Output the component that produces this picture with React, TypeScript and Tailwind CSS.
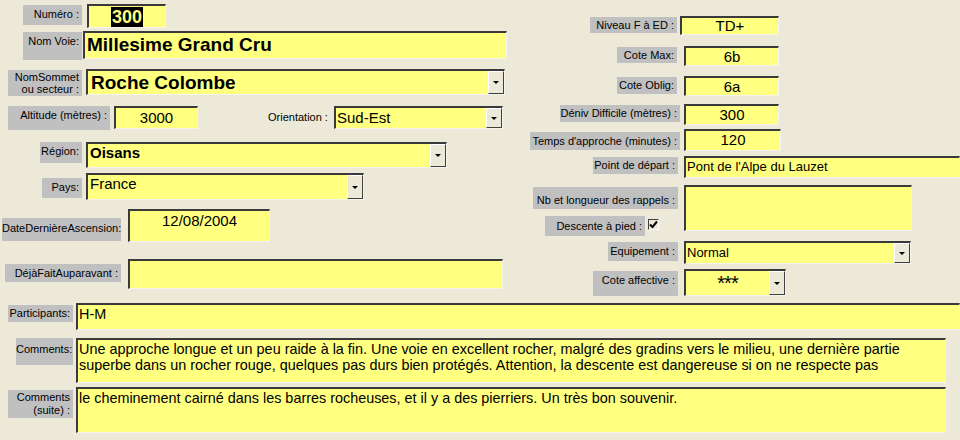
// Formulaire Access "Voies" : fiche d'une voie d'escalade
import type { ReactNode } from 'react'

const LBL =
  'bg-[#c0c0c0] text-right text-[11px] leading-[13px] text-black pr-[3px] pt-[3px] whitespace-nowrap'
const FLD =
  'bg-[#ffff80] border-t-2 border-l-2 border-t-[#3a3a3a] border-l-[#3a3a3a] border-b border-r border-b-[#f4f4ee] border-r-[#f4f4ee] text-black overflow-hidden'

// petit bouton de liste déroulante (style Windows)
function DropBtn() {
  return (
    <div className="flex w-[16px] shrink-0 items-center justify-center border-t border-l border-t-white border-l-white border-b border-r border-b-[#404040] border-r-[#404040] bg-[#ece9d8]">
      <div className="h-0 w-0 border-t-[3px] border-r-[3px] border-l-[3px] border-t-black border-r-transparent border-l-transparent" />
    </div>
  )
}

function Combo({ className, children }: { className: string; children?: ReactNode }) {
  return (
    <div className={`${FLD} flex ${className}`}>
      <div className="min-w-0 flex-1">{children}</div>
      <DropBtn />
    </div>
  )
}

function Left() {
  return (
    <div className="flex w-[520px] shrink-0 flex-col">
      {/* Numéro */}
      <div className="mt-[4px] flex h-[24px] items-start">
        <div className={`${LBL} ml-[23px] mt-[1px] h-[20px] w-[59px]`}>Numéro :</div>
        <div className={`${FLD} ml-[5px] flex h-[24px] w-[79px] items-center justify-center`}>
          <span className="bg-black px-[1px] text-[18px] font-bold leading-[20px] text-[#ffff80]">300</span>
        </div>
      </div>

      {/* Nom Voie */}
      <div className="mt-[3px] flex h-[29px] items-start">
        <div className={`${LBL} ml-[23px] mt-[1px] h-[28px] w-[59px]`}>Nom Voie:</div>
        <div className={`${FLD} ml-[1px] h-[28px] w-[424px] pl-[2px] text-[19px] font-bold leading-[24px]`}>
          Millesime Grand Cru
        </div>
      </div>

      {/* NomSommet */}
      <div className="mt-[9px] flex h-[27px] items-start">
        <div className={`${LBL} ml-[8px] mt-[1px] h-[26px] w-[74px] !pt-[1px] !leading-[12px]`}>
          NomSommet
          <br />
          ou secteur :
        </div>
        <Combo className="ml-[4px] h-[26px] w-[419px]">
          <div className="pl-[3px] text-[19px] font-bold leading-[24px]">Roche Colombe</div>
        </Combo>
      </div>

      {/* Altitude / Orientation */}
      <div className="mt-[10px] flex h-[24px] items-start">
        <div className={`${LBL} ml-[8px] h-[24px] w-[102px]`}>Altitude (mètres) :</div>
        <div className={`${FLD} ml-[4px] h-[23px] w-[84px] text-center text-[15px] leading-[20px]`}>3000</div>
        <div className="ml-[70px] mt-[5px] w-[64px] text-[11px] leading-[13px] whitespace-nowrap">Orientation :</div>
        <Combo className="ml-[2px] h-[23px] w-[169px]">
          <div className="pl-[1px] text-[15px] leading-[19px]">Sud-Est</div>
        </Combo>
      </div>

      {/* Région */}
      <div className="mt-[12px] flex h-[26px] items-start">
        <div className={`${LBL} ml-[40px] h-[21px] w-[42px]`}>Région:</div>
        <Combo className="ml-[4px] h-[26px] w-[361px]">
          <div className="pl-[2px] text-[15px] font-bold leading-[18px]">Oisans</div>
        </Combo>
      </div>

      {/* Pays */}
      <div className="mt-[5px] flex h-[27px] items-start">
        <div className={`${LBL} ml-[42px] mt-[5px] h-[20px] w-[40px]`}>Pays:</div>
        <Combo className="ml-[4px] h-[27px] w-[278px]">
          <div className="pl-[2px] text-[15px] leading-[18px]">France</div>
        </Combo>
      </div>

      {/* DateDernièreAscension */}
      <div className="mt-[9px] flex h-[33px] items-start">
        <div className={`${LBL} ml-[2px] mt-[9px] h-[23px] w-[119px] !pt-[4px] !pr-[2px]`}>DateDernièreAscension:</div>
        <div className={`${FLD} ml-[7px] h-[33px] w-[142px] text-center text-[15px] leading-[20px]`}>12/08/2004</div>
      </div>

      {/* DéjàFaitAuparavant */}
      <div className="mt-[17px] flex h-[30px] items-start">
        <div className={`${LBL} ml-[5px] mt-[5px] h-[18px] w-[116px]`}>DéjàFaitAuparavant :</div>
        <div className={`${FLD} ml-[7px] h-[30px] w-[375px]`} />
      </div>
    </div>
  )
}

function Right() {
  return (
    <div className="flex flex-1 flex-col">
      <div className="mt-[16px] flex h-[19px] items-start">
        <div className={`${LBL} ml-[70px] mt-[1px] h-[16px] w-[87px] !pt-[2px]`}>Niveau F à ED :</div>
        <div className={`${FLD} ml-[3px] h-[19px] w-[99px] text-center text-[15px] leading-[16px]`}>TD+</div>
      </div>
      <div className="mt-[11px] flex h-[20px] items-start">
        <div className={`${LBL} ml-[97px] mt-[1px] h-[16px] w-[60px] !pt-[2px]`}>Cote Max:</div>
        <div className={`${FLD} ml-[7px] h-[20px] w-[95px] text-center text-[15px] leading-[17px]`}>6b</div>
      </div>
      <div className="mt-[10px] flex h-[20px] items-start">
        <div className={`${LBL} ml-[97px] mt-[1px] h-[17px] w-[60px] !pt-[2px]`}>Cote Oblig:</div>
        <div className={`${FLD} ml-[7px] h-[20px] w-[95px] text-center text-[15px] leading-[17px]`}>6a</div>
      </div>
      <div className="mt-[8px] flex h-[22px] items-start">
        <div className={`${LBL} ml-[40px] mt-[1px] h-[17px] w-[120px] !pt-[2px]`}>Déniv Difficile (mètres) :</div>
        <div className={`${FLD} ml-[4px] h-[21px] w-[95px] text-center text-[15px] leading-[17px]`}>300</div>
      </div>
      <div className="mt-[3px] flex h-[24px] items-start">
        <div className={`${LBL} ml-[10px] mt-[3px] h-[18px] w-[150px] !pt-[3px]`}>Temps d'approche (minutes) :</div>
        <div className={`${FLD} ml-[4px] h-[22px] w-[97px] text-center text-[15px] leading-[17px]`}>120</div>
      </div>
      <div className="mt-[3px] flex h-[22px] items-start">
        <div className={`${LBL} ml-[73px] mt-[1px] h-[17px] w-[85px] !pt-[2px]`}>Point de départ :</div>
        <div className={`${FLD} ml-[6px] h-[22px] w-[276px] pl-[1px] text-[13px] leading-[17px]`}>
          Pont de l'Alpe du Lauzet
        </div>
      </div>

      {/* rappels + descente à pied */}
      <div className="mt-[7px] flex h-[51px] items-start">
        <div className="flex w-[164px] flex-col">
          <div className={`${LBL} ml-[13px] mt-[2px] h-[22px] w-[145px] !pt-[7px]`}>Nb et longueur des rappels :</div>
          <div className="ml-[25px] mt-[7px] flex items-start">
            <div className={`${LBL} h-[20px] w-[100px] !pt-[4px]`}>Descente à pied :</div>
            <div className="ml-[3px] mt-[3px] flex h-[11px] w-[11px] items-center justify-center border-t border-l border-t-[#404040] border-l-[#404040] border-b border-r border-b-white border-r-white bg-[#ece9d8]">
              <svg width="9" height="9" viewBox="0 0 9 9">
                <path d="M1 4.5 L3.5 7 L8 1.5" fill="none" stroke="black" strokeWidth="2" />
              </svg>
            </div>
          </div>
        </div>
        <div className={`${FLD} h-[46px] w-[228px]`} />
      </div>

      <div className="mt-[5px] flex h-[23px] items-start">
        <div className={`${LBL} ml-[88px] mt-[1px] h-[19px] w-[70px] !pt-[3px]`}>Equipement :</div>
        <Combo className="ml-[6px] h-[23px] w-[227px]">
          <div className="pl-[1px] text-[13px] leading-[19px]">Normal</div>
        </Combo>
      </div>
      <div className="mt-[5px] flex h-[27px] items-start">
        <div className={`${LBL} ml-[73px] mt-[2px] h-[25px] w-[85px]`}>Cote affective :</div>
        <Combo className="ml-[6px] h-[27px] w-[102px]">
          <div className="pt-[2px] text-center text-[20px] leading-[20px] tracking-[-1px]">***</div>
        </Combo>
      </div>
    </div>
  )
}

export default function App() {
  return (
    <div className="h-[440px] w-[960px] overflow-hidden bg-[#ece9d8] font-['Liberation_Sans',Arial,sans-serif] text-black">
      <div className="flex h-[300px]">
        <Left />
        <Right />
      </div>

      {/* Participants */}
      <div className="mt-[3px] flex h-[27px] items-start">
        <div className={`${LBL} ml-[8px] mt-[2px] h-[17px] w-[65px] !pt-[2px]`}>Participants:</div>
        <div className={`${FLD} ml-[3px] h-[27px] w-[884px] pl-[1px] text-[14.4px] leading-[18px]`}>H-M</div>
      </div>

      {/* Comments */}
      <div className="mt-[8px] flex h-[45px] items-start">
        <div className={`${LBL} ml-[16px] h-[27px] w-[57px] !pt-[5px]`}>Comments:</div>
        <div className={`${FLD} ml-[3px] h-[45px] w-[870px] pl-[1px] pt-[1px] text-[14.4px] leading-[16px] whitespace-nowrap`}>
          Une approche longue et un peu raide à la fin. Une voie en excellent rocher, malgré des gradins vers le
          milieu, une dernière partie
          <br />
          superbe dans un rocher rouge, quelques pas durs bien protégés. Attention, la descente est dangereuse si on
          ne respecte pas
        </div>
      </div>

      {/* Comments (suite) */}
      <div className="mt-[4px] flex h-[46px] items-start">
        <div className={`${LBL} ml-[8px] mt-[3px] h-[28px] w-[65px] !pt-[1px] !leading-[13px]`}>
          Comments
          <br />
          (suite) :
        </div>
        <div className={`${FLD} ml-[3px] h-[46px] w-[870px] pl-[1px] pt-[1px] text-[14.4px] leading-[16px]`}>
          le cheminement cairné dans les barres rocheuses, et il y a des pierriers. Un très bon souvenir.
        </div>
      </div>
    </div>
  )
}
